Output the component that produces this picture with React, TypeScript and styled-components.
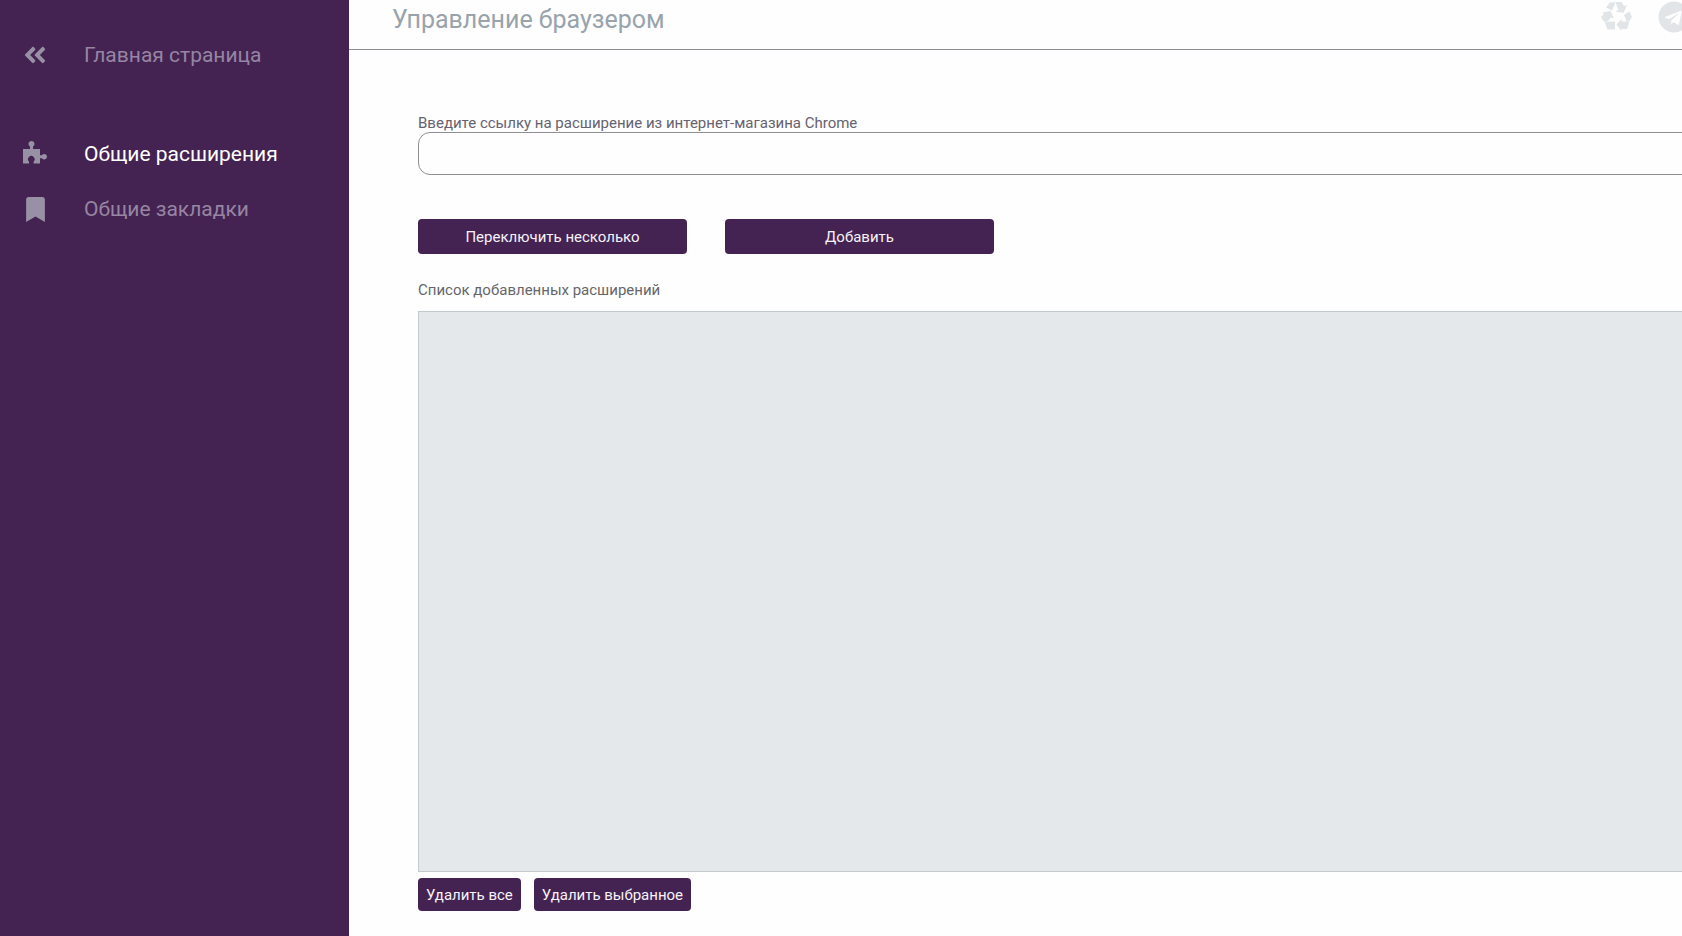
import React from "react";
import styled, { createGlobalStyle } from "styled-components";
import { FaAngleDoubleLeft, FaBookmark, FaTelegram } from "react-icons/fa";

const GlobalStyle = createGlobalStyle`
  *, *::before, *::after { box-sizing: border-box; }
  body {
    margin: 0;
    background: #fefefe;
    font-family: Roboto, "Liberation Sans", sans-serif;
    overflow-x: hidden;
  }
  button, input { font-family: inherit; }
`;

const Page = styled.div`
  display: flex;
  min-height: 100vh;
`;

const Sidebar = styled.nav`
  flex: 0 0 349px;
  padding: 40px 20px;
  background: #442352;
`;

const NavGroup = styled.div`
  display: flex;
  flex-direction: column;
  gap: 25px;
  margin-bottom: 69px;
`;

const NavLink = styled.a<{ $active?: boolean }>`
  display: flex;
  align-items: center;
  gap: 34px;
  height: 30px;
  color: ${(p) => (p.$active ? "#ffffff" : "#9685a3")};
  font-size: 21px;
  line-height: 30px;
  text-decoration: none;
  white-space: nowrap;
`;

const NavIcon = styled.span`
  display: flex;
  flex: 0 0 30px;
  align-items: center;
  justify-content: center;
  height: 30px;
  color: #9890a5;
`;

const Main = styled.main`
  display: flex;
  flex: 1;
  flex-direction: column;
  min-width: 0;
`;

const Header = styled.header`
  display: flex;
  align-items: flex-start;
  justify-content: space-between;
  height: 50px;
  padding-left: 43px;
  border-bottom: 1px solid #8d8c92;
`;

const Title = styled.h1`
  margin: 0;
  color: #98a3ac;
  font-size: 25px;
  font-weight: 400;
  line-height: 40px;
`;

const HeaderActions = styled.div`
  display: flex;
  gap: 26px;
  margin-right: -8px;
  padding-top: 1px;
`;

const IconButton = styled.button`
  display: flex;
  padding: 0;
  border: 0;
  background: none;
  color: #e1e5e8;
`;

const Content = styled.section`
  display: flex;
  flex: 1;
  flex-direction: column;
  padding: 64px 0 25px 69px;
`;

const Field = styled.div`
  display: flex;
  flex-direction: column;
  margin: 0 -20px 44px 0;
`;

const Label = styled.label`
  color: #66626e;
  font-size: 15px;
  line-height: 18px;
`;

const LinkInput = styled.input`
  height: 43px;
  padding: 0 14px;
  border: 1px solid #8f8f93;
  border-radius: 12px;
  background: #fefefe;
  font-size: 15px;
`;

const Actions = styled.div<{ $gap: number }>`
  display: flex;
  gap: ${(p) => p.$gap}px;
`;

const Button = styled.button<{ $wide?: boolean }>`
  width: ${(p) => (p.$wide ? "269px" : "auto")};
  height: ${(p) => (p.$wide ? 35 : 33)}px;
  padding: 0 8px;
  border: 0;
  border-radius: 4px;
  background: #442352;
  color: #f6f2f8;
  font-size: 15px;
  white-space: nowrap;
`;

const ListTitle = styled.h2`
  margin: 26px 0 11px;
  color: #66666a;
  font-size: 15px;
  font-weight: 400;
  line-height: 20px;
`;

const ExtensionList = styled.div`
  flex: 1;
  min-height: 200px;
  margin: 0 -20px 6px 0;
  border: 1px solid #c3cacd;
  background: #e4e8eb;
`;

function PuzzleIcon() {
  return (
    <svg width="24" height="27" viewBox="0 0 24 27" fill="currentColor" aria-hidden="true">
      <path d="M0 8H7V5.6A3 3 0 1 1 10 5.6V8H17V14.2H18.8A2.8 2.8 0 1 1 18.8 17.2H17V22.5H10.6V20.6A3.3 3.3 0 1 0 6 20.6V22.5H0Z" />
    </svg>
  );
}

function RecycleIcon() {
  return (
    <svg width="31" height="31" viewBox="0 0 31 31" fill="currentColor" aria-hidden="true">
      <path d="M9 1.5L14.5 1L11 9.5L5 6.5Z" />
      <path d="M14.5 1H20.5L23 5L26 4L22.5 12L14.5 10.5L17.5 9Z" />
      <path d="M23 14L28.5 10.5L31 16L28 20.5H25.5Z" />
      <path d="M15.5 23.5L20.5 18V20.5H28.5L26 28H20.5V30Z" />
      <path d="M3.5 20.5H14V28.5H6.5Z" />
      <path d="M1 11.5L9.5 10L13 17.5L10 16.5L7 20L2.5 20.5L0 16L3 12.8Z" />
    </svg>
  );
}

export default function App() {
  return (
    <>
      <GlobalStyle />
      <Page>
        <Sidebar>
          <NavGroup>
            <NavLink href="#home">
              <NavIcon><FaAngleDoubleLeft size={26} /></NavIcon>
              Главная страница
            </NavLink>
          </NavGroup>
          <NavGroup>
            <NavLink href="#extensions" $active>
              <NavIcon><PuzzleIcon /></NavIcon>
              Общие расширения
            </NavLink>
            <NavLink href="#bookmarks">
              <NavIcon><FaBookmark size={25} /></NavIcon>
              Общие закладки
            </NavLink>
          </NavGroup>
        </Sidebar>
        <Main>
          <Header>
            <Title>Управление браузером</Title>
            <HeaderActions>
              <IconButton type="button" aria-label="Очистить">
                <RecycleIcon />
              </IconButton>
              <IconButton type="button" aria-label="Telegram">
                <FaTelegram size={32} />
              </IconButton>
            </HeaderActions>
          </Header>
          <Content>
            <Field>
              <Label htmlFor="extension-link">
                Введите ссылку на расширение из интернет-магазина Chrome
              </Label>
              <LinkInput id="extension-link" type="text" />
            </Field>
            <Actions $gap={38}>
              <Button type="button" $wide>Переключить несколько</Button>
              <Button type="button" $wide>Добавить</Button>
            </Actions>
            <ListTitle>Список добавленных расширений</ListTitle>
            <ExtensionList />
            <Actions $gap={13}>
              <Button type="button">Удалить все</Button>
              <Button type="button">Удалить выбранное</Button>
            </Actions>
          </Content>
        </Main>
      </Page>
    </>
  );
}
